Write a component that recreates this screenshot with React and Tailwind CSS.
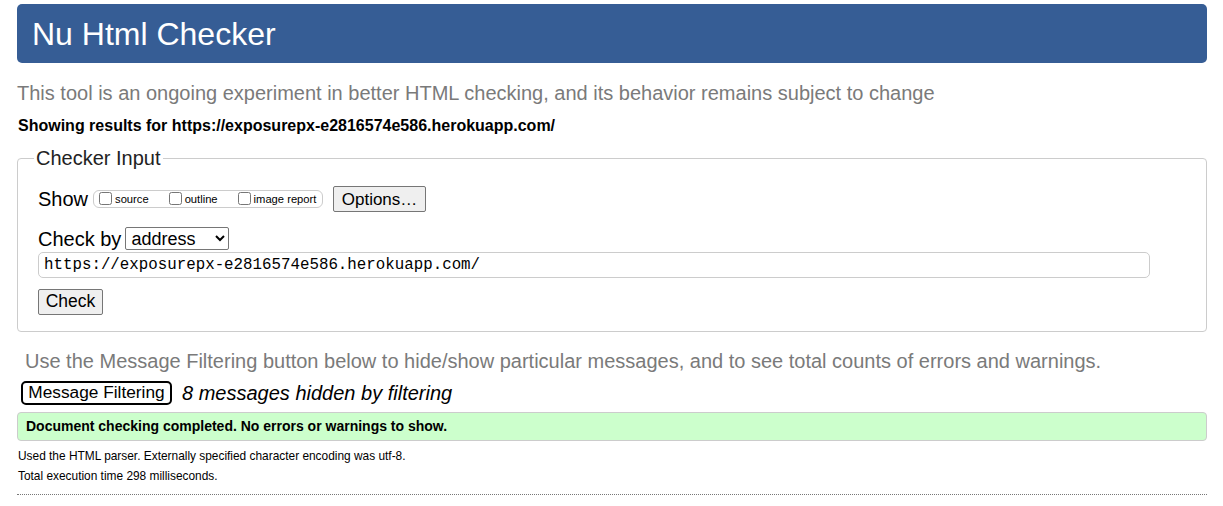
import React from "react";

const Checkbox = ({ label }) => (
  <label className="flex items-center">
    <input type="checkbox" className="m-0 ml-[4px] mr-[3px] h-[13px] w-[13px]" />
    <span className="mt-[2px] text-[11.2px] leading-none">{label}</span>
  </label>
);

const App = () => {
  return (
    <div className="min-h-screen bg-white pl-[17px] pr-[16px] pt-[4px] text-black font-['Liberation_Sans',Arial,sans-serif]">
      <header className="flex h-[59px] items-center rounded-[5px] bg-[#365d95] pl-[15px]">
        <h1 className="text-[32px] leading-none text-white">Nu Html Checker</h1>
      </header>

      <p className="mt-[18px] text-[20px] leading-[24px] text-[#7a7a7a]">
        This tool is an ongoing experiment in better HTML checking, and its behavior remains subject to change
      </p>
      <p className="mt-[12px] pl-[1px] text-[16px] font-bold leading-[18px]">
        Showing results for https://exposurepx-e2816574e586.herokuapp.com/
      </p>

      <fieldset className="mt-[11px] rounded-[4px] border border-[#cccccc] px-[20px] pb-[16px]">
        <legend className="-ml-[4px] px-[2px] text-[20px] leading-[24px] text-[#222]">Checker Input</legend>

        <div className="mt-[16px] flex h-[26px] items-center">
          <span className="text-[20px] leading-none">Show</span>
          <div className="ml-[5px] flex h-[18px] w-[230px] items-center gap-[16px] rounded-[6px] border border-[#cccccc] pl-[1px]">
            <Checkbox label="source" />
            <Checkbox label="outline" />
            <Checkbox label="image report" />
          </div>
          <button className="ml-[10px] h-[26px] w-[93px] rounded-[2px] border border-[#767676] bg-[#efefef] text-[17px] leading-none">
            Options…
          </button>
        </div>

        <div className="mt-[15px] flex h-[23px] items-center">
          <span className="text-[20px] leading-none">Check by</span>
          <select className="ml-[4px] h-[23px] w-[104px] rounded-[2px] border border-[#767676] bg-white pl-[1px] text-[18px] leading-none">
            <option>address</option>
          </select>
        </div>

        <input
          type="text"
          readOnly
          value="https://exposurepx-e2816574e586.herokuapp.com/"
          className="mt-[2px] block h-[26px] w-[1112px] rounded-[5px] border border-[#cccccc] pl-[5px] font-['Liberation_Mono',monospace] text-[15.8px] outline-none"
        />

        <button className="mt-[11px] block h-[26px] w-[65px] rounded-[2px] border border-[#767676] bg-[#efefef] text-[17.5px] leading-none">
          Check
        </button>
      </fieldset>

      <p className="mt-[17px] pl-[8px] text-[20px] leading-[24px] text-[#7a7a7a]">
        Use the Message Filtering button below to hide/show particular messages, and to see total counts of errors and warnings.
      </p>

      <div className="mt-[8px] flex items-center pl-[4px]">
        <button className="h-[24px] w-[151px] rounded-[5px] border-2 border-black bg-white text-[17.3px] leading-none">
          Message Filtering
        </button>
        <span className="ml-[10px] text-[20px] italic leading-none">8 messages hidden by filtering</span>
      </div>

      <div className="mt-[7px] flex h-[29px] items-center rounded-[4px] border border-[#cccccc] bg-[#ccffcc] pl-[8px] text-[14px] font-bold">
        Document checking completed. No errors or warnings to show.
      </div>

      <div className="mt-[5px] pl-[1px] text-[11.9px] leading-[20px]">
        <p>Used the HTML parser. Externally specified character encoding was utf-8.</p>
        <p>Total execution time 298 milliseconds.</p>
      </div>

      <hr className="mt-[8px] border-0 border-t border-dotted border-[#777]" />
    </div>
  );
};

export default App;
